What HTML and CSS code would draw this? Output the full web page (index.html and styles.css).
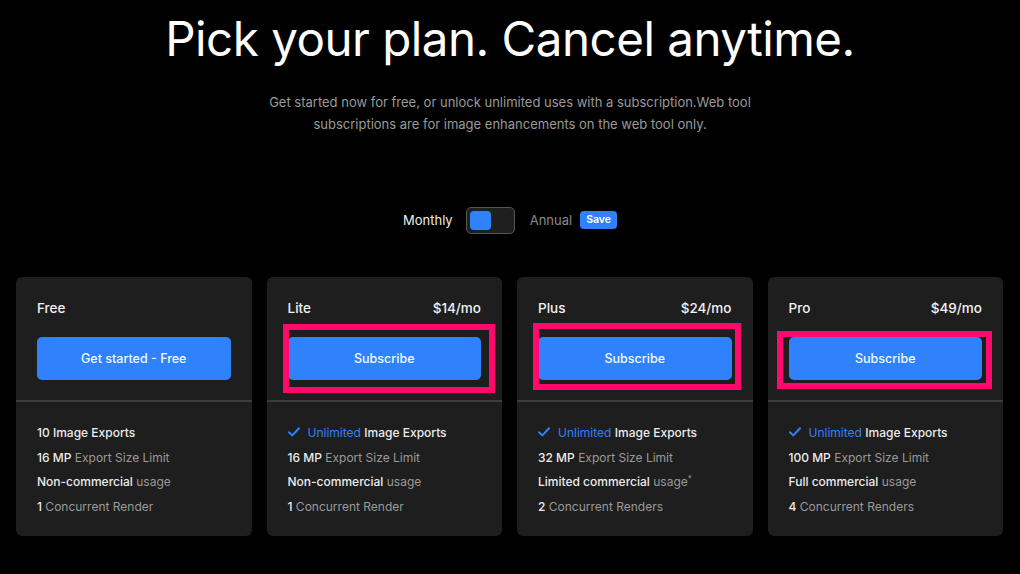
FILE: index.html
```html
<!DOCTYPE html>
<html lang="en">
<head>
    <meta charset="UTF-8">
    <meta name="viewport" content="width=device-width, initial-scale=1.0">
    <title>Pricing</title>
    <link rel="stylesheet" href="styles.css">
</head>
<body>
    <header class="hero">
        <h1>Pick your plan. Cancel anytime.</h1>
        <p class="lead">Get started now for free, or unlock unlimited uses with a subscription.Web tool<br>subscriptions are for image enhancements on the web tool only.</p>
    </header>

    <div class="billing">
        <span class="billing-label active">Monthly</span>
        <button class="switch"><span class="knob"></span></button>
        <span class="billing-label">Annual</span>
        <span class="save">Save</span>
    </div>

    <div class="plans">
        <div class="plan">
            <div class="plan-top">
                <div class="plan-head"><span>Free</span></div>
                <button class="plan-btn">Get started - Free</button>
            </div>
            <ul class="features">
                <li><b>10 Image Exports</b></li>
                <li><b>16 MP</b> Export Size Limit</li>
                <li><b>Non-commercial</b> usage</li>
                <li><b>1</b> Concurrent Render</li>
            </ul>
        </div>

        <div class="plan">
            <div class="plan-top">
                <div class="plan-head"><span>Lite</span><span>$14/mo</span></div>
                <button class="plan-btn">Subscribe</button>
                <div class="mark mark-lite"></div>
            </div>
            <ul class="features">
                <li><svg class="check" viewBox="0 0 12 10"><path d="M1 5.2l3.3 3.2L11 1.3"/></svg><span class="blue">Unlimited</span> <b>Image Exports</b></li>
                <li><b>16 MP</b> Export Size Limit</li>
                <li><b>Non-commercial</b> usage</li>
                <li><b>1</b> Concurrent Render</li>
            </ul>
        </div>

        <div class="plan">
            <div class="plan-top">
                <div class="plan-head"><span>Plus</span><span>$24/mo</span></div>
                <button class="plan-btn">Subscribe</button>
                <div class="mark mark-plus"></div>
            </div>
            <ul class="features">
                <li><svg class="check" viewBox="0 0 12 10"><path d="M1 5.2l3.3 3.2L11 1.3"/></svg><span class="blue">Unlimited</span> <b>Image Exports</b></li>
                <li><b>32 MP</b> Export Size Limit</li>
                <li><b>Limited commercial</b> usage<sup>*</sup></li>
                <li><b>2</b> Concurrent Renders</li>
            </ul>
        </div>

        <div class="plan">
            <div class="plan-top">
                <div class="plan-head"><span>Pro</span><span>$49/mo</span></div>
                <button class="plan-btn">Subscribe</button>
                <div class="mark mark-pro"></div>
            </div>
            <ul class="features">
                <li><svg class="check" viewBox="0 0 12 10"><path d="M1 5.2l3.3 3.2L11 1.3"/></svg><span class="blue">Unlimited</span> <b>Image Exports</b></li>
                <li><b>100 MP</b> Export Size Limit</li>
                <li><b>Full commercial</b> usage</li>
                <li><b>4</b> Concurrent Renders</li>
            </ul>
        </div>
    </div>
</body>
</html>
```

FILE: styles.css
```css
body {
    font-family: Inter, 'Noto Sans', sans-serif;
    background-color: #000;
    margin: 0;
    padding: 0;
    color: #eee;
}

.hero {
    text-align: center;
    padding-top: 9px;
}

.hero h1 {
    margin: 0;
    font-size: 47.5px;
    font-weight: 400;
    line-height: 60px;
    letter-spacing: -0.5px;
    color: #fff;
}

.lead {
    margin: 22px 0 0;
    font-size: 13px;
    line-height: 22px;
    color: #9a9a9a;
}

.billing {
    display: flex;
    justify-content: center;
    align-items: center;
    margin-top: 71px;
    height: 28px;
    font-size: 13px;
}

.billing-label {
    color: #8a8a8a;
}

.billing-label.active {
    color: #eee;
}

.switch {
    width: 49px;
    height: 27px;
    margin: 0 15px 0 13px;
    padding: 3px;
    border: 1px solid #555;
    border-radius: 5px;
    background-color: #1f1f1f;
    box-sizing: border-box;
    display: flex;
}

.knob {
    width: 21px;
    height: 19px;
    border-radius: 4px;
    background-color: #2f82fb;
}

.save {
    margin-left: 8px;
    padding: 2px 6px;
    border-radius: 4px;
    background-color: #2f82fb;
    color: #fff;
    font-size: 10.5px;
    font-weight: 600;
    line-height: 14px;
}

.plans {
    display: grid;
    grid-template-columns: repeat(4, 1fr);
    gap: 15px;
    padding: 0 17px 0 16px;
    margin-top: 43px;
}

.plan {
    background-color: #1e1e1e;
    border-radius: 6px;
    height: 259px;
}

.plan-top {
    position: relative;
    padding: 21px 21px 20px;
    border-bottom: 2px solid #3c3c3c;
}

.plan-head {
    display: flex;
    justify-content: space-between;
    height: 20px;
    line-height: 20px;
    font-size: 13.5px;
    font-weight: 500;
    color: #f2f2f2;
}

.plan-btn {
    display: block;
    width: 100%;
    height: 43px;
    margin-top: 19px;
    border: none;
    border-radius: 5px;
    background-color: #2f82fb;
    color: #f4f8ff;
    font-family: inherit;
    font-size: 12.5px;
    font-weight: 500;
    cursor: pointer;
}

.mark {
    position: absolute;
    border: 6px solid #ff0a6c;
    box-sizing: border-box;
}

.mark-lite {
    left: 16px;
    top: 47px;
    width: 212px;
    height: 69px;
}

.mark-plus {
    left: 16px;
    top: 46px;
    width: 208px;
    height: 67px;
}

.mark-pro {
    left: 9px;
    top: 54px;
    width: 215px;
    height: 58px;
}

.features {
    list-style: none;
    margin: 0;
    padding: 19px 21px 0;
    font-size: 12px;
    line-height: 24.5px;
    color: #9a9a9a;
}

.features b {
    font-weight: 500;
    color: #ececec;
}

.features sup {
    font-size: 8px;
    line-height: 0;
}

.blue {
    color: #2f82fb;
}

.check {
    width: 12px;
    height: 10px;
    margin-right: 8px;
    fill: none;
    stroke: #2f82fb;
    stroke-width: 2;
    stroke-linecap: round;
    stroke-linejoin: round;
}
```
